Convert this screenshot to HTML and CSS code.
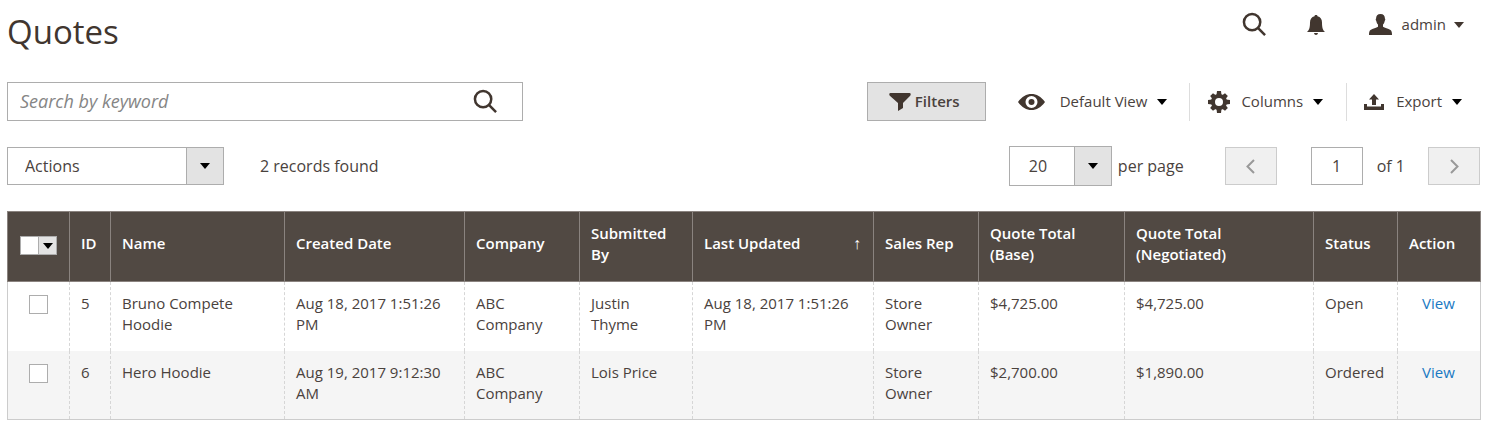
FILE: index.html
```html
<!DOCTYPE html>
<html lang="en">
<head>
    <meta charset="utf-8">
    <title>Quotes</title>
    <meta name="viewport" content="width=device-width, initial-scale=1">
    <link rel="stylesheet" href="styles.css">
</head>
<body>
    <!-- page header -->
    <header class="page-header">
        <h1>Quotes</h1>
        <div class="header-tools">
            <button type="button" class="plain" aria-label="Search">
                <svg class="icon-search" viewBox="0 0 26 26"><circle cx="10.5" cy="10.5" r="8.5"/><path d="M16.5 16.5L24 24"/></svg>
            </button>
            <button type="button" class="plain bell" aria-label="Notifications">
                <svg width="18" height="20" viewBox="0 0 18 20"><path d="M9 0c.9 0 1.5.5 1.5 1.3C13.5 2 15 4.3 15 7.5c0 5 .8 7.500 3 9.500H0c2.200-2 3-4.500 3-9.500 0-3.200 1.500-5.500 4.500-6.200C7.500.5 8.100 0 9 0zM7 18h4c-.2 1.300-1 2-2 2s-1.800-.7-2-2z"/></svg>
            </button>
            <button type="button" class="plain user">
                <svg width="23" height="21" viewBox="0 0 23 21"><path d="M11.500 0c3 0 4.500 1.700 4.400 4.600.6.4.5 1.800-.2 2.300-.3 1.700-.8 2.700-1.700 3.600v2.300c1.500 1.400 5.300 1.600 7.500 3.200 1.200.9 1.500 2.500 1.500 5H0c0-2.500.3-4.100 1.500-5 2.200-1.600 6-1.800 7.500-3.200v-2.300c-.9-.9-1.400-1.900-1.700-3.600-.7-.5-.8-1.900-.2-2.300C7 1.700 8.500 0 11.500 0z"/></svg>
                <span>admin</span>
                <span class="caret"></span>
            </button>
        </div>
    </header>

    <!-- search + grid controls -->
    <div class="toolbar">
        <div class="search">
            <input type="text" placeholder="Search by keyword" aria-label="Search by keyword">
            <button type="button" class="plain" aria-label="Search">
                <svg class="icon-search" viewBox="0 0 26 26"><circle cx="10.5" cy="10.5" r="8.5"/><path d="M16.5 16.5L24 24"/></svg>
            </button>
        </div>
        <div class="controls">
            <button type="button" class="filters">
                <svg width="22" height="18" viewBox="0 0 22 18"><path d="M1.500 0h19c1.500 0 1.500 2 .7 2.800L14 10v5l-5 3v-8L.8 2.800C0 2 0 0 1.500 0z"/></svg>
                <span>Filters</span>
            </button>
            <button type="button" class="plain control view">
                <svg width="27" height="16" viewBox="0 0 27 16"><path fill-rule="evenodd" d="M0 8C4 2.500 8.500 0 13.500 0S23 2.500 27 8c-4 5.500-8.500 8-13.500 8S4 13.500 0 8zm13.500-6a6 6 0 1 0 0 12 6 6 0 0 0 0-12z"/><circle cx="13.5" cy="8" r="3"/></svg>
                <span>Default View</span>
                <span class="caret"></span>
            </button>
            <button type="button" class="plain control columns">
                <svg width="22" height="22" viewBox="-11 -11 22 22"><circle class="ring" r="6"/><path d="M-2.500-7L-2-11h4L2.500-7zM-2.500 7L-2 11h4L2.500 7zM-7-2.500L-11-2v4L-7 2.500zM7-2.500L11-2v4L7 2.500z"/><path transform="rotate(45)" d="M-2.500-7L-2-10.500h4L2.500-7zM-2.500 7L-2 10.500h4L2.500 7zM-7-2.500L-10.500-2v4L-7 2.500zM7-2.500L10.500-2v4L7 2.500z"/></svg>
                <span>Columns</span>
                <span class="caret"></span>
            </button>
            <button type="button" class="plain control export">
                <svg width="20" height="16" viewBox="0 0 20 16"><path d="M10 0l5 5.500h-3V11H8V5.500H5zM0 10h3v2.500h14V10h3v6H0z"/></svg>
                <span>Export</span>
                <span class="caret"></span>
            </button>
        </div>
    </div>

    <!-- mass actions + paging -->
    <div class="toolbar paging">
        <div class="mass">
            <div class="select actions">
                <select aria-label="Actions"><option>Actions</option></select>
            </div>
            <span>2 records found</span>
        </div>
        <div class="pager">
            <div class="select size">
                <select id="per-page"><option>20</option></select>
            </div>
            <label for="per-page">per page</label>
            <button type="button" class="step prev" aria-label="Previous page" disabled>
                <svg width="9" height="15" viewBox="0 0 9 15"><path d="M8 1L1.500 7.500 8 14"/></svg>
            </button>
            <input type="text" id="page" value="1">
            <label for="page" class="total">of 1</label>
            <button type="button" class="step" aria-label="Next page" disabled>
                <svg width="9" height="15" viewBox="0 0 9 15"><path d="M1 1l6.500 6.500L1 14"/></svg>
            </button>
        </div>
    </div>

    <table class="grid">
        <colgroup>
            <col class="c-check"><col class="c-id"><col class="c-name"><col class="c-created">
            <col class="c-company"><col class="c-by"><col class="c-updated"><col class="c-rep">
            <col class="c-base"><col class="c-negotiated"><col class="c-status"><col class="c-action">
        </colgroup>
        <thead>
            <tr>
                <th class="check">
                    <div class="multicheck">
                        <input type="checkbox" aria-label="Select all">
                        <button type="button" aria-label="Selection options"><span class="caret"></span></button>
                    </div>
                </th>
                <th>ID</th>
                <th>Name</th>
                <th>Created Date</th>
                <th>Company</th>
                <th>Submitted By</th>
                <th><div class="sorted"><span>Last Updated</span><span class="arrow">↑</span></div></th>
                <th>Sales Rep</th>
                <th>Quote Total (Base)</th>
                <th>Quote Total<br>(Negotiated)</th>
                <th>Status</th>
                <th>Action</th>
            </tr>
        </thead>
        <tbody>
            <tr>
                <td class="check"><input type="checkbox" aria-label="Select quote 5"></td>
                <td>5</td>
                <td>Bruno Compete Hoodie</td>
                <td>Aug 18, 2017 1:51:26 PM</td>
                <td>ABC Company</td>
                <td>Justin Thyme</td>
                <td>Aug 18, 2017 1:51:26 PM</td>
                <td>Store Owner</td>
                <td>$4,725.00</td>
                <td>$4,725.00</td>
                <td>Open</td>
                <td class="action"><a href="#">View</a></td>
            </tr>
            <tr>
                <td class="check"><input type="checkbox" aria-label="Select quote 6"></td>
                <td>6</td>
                <td>Hero Hoodie</td>
                <td>Aug 19, 2017 9:12:30 AM</td>
                <td>ABC Company</td>
                <td>Lois Price</td>
                <td></td>
                <td>Store Owner</td>
                <td>$2,700.00</td>
                <td>$1,890.00</td>
                <td>Ordered</td>
                <td class="action"><a href="#">View</a></td>
            </tr>
        </tbody>
    </table>
</body>
</html>
```
FILE: styles.css
```css
* {box-sizing: border-box;}
body {margin: 0; padding: 6px 7px 8px; background: #fff; color: #4a423d; font: 15px/21px "Open Sans", "Noto Sans", sans-serif;}
button, input, select {font: inherit; color: inherit; border-radius: 0; margin: 0;}
button {display: flex; align-items: center; cursor: pointer;}
svg {display: block; fill: #41362f; flex: none;}
.plain {border: 0; background: none; padding: 0;}
.caret {border: 5px solid transparent; border-top: 6px solid #000; border-bottom: 0;}
.icon-search {width: 25px; height: 25px; fill: none; stroke: #41362f; stroke-width: 2.6;}

/* header */
.page-header {display: flex; justify-content: space-between; height: 76px;}
h1 {margin: 4px 0 0; font-size: 33px; line-height: 44px; font-weight: 400; color: #41362f;}
.header-tools {display: flex; align-items: center; height: 37px; padding-right: 16px;}
.bell {margin: 0 44px 0 40px;}
.user .caret {margin-left: 8px; border-top-color: #41362f;}
.user svg {margin-right: 10px;}

/* toolbars */
.toolbar {display: flex; justify-content: space-between; align-items: center;}
.search {display: flex; width: 35%; height: 39px; border: 1px solid #adadad; padding-right: 24px;}
.search input {flex: 1; min-width: 0; border: 0; padding: 0 12px; font-size: 18px;}
.search input::placeholder {color: #858585; font-style: italic; opacity: 1;}
.controls {display: flex; align-items: center;}
.filters {height: 39px; width: 119px; justify-content: center; gap: 4px; padding: 0 4px 0 0; border: 1px solid #adadad; background: #e3e3e3; font-weight: 600;}
.control {height: 38px;}
.control .caret {margin-left: 10px;}
.view {margin-left: 32px; padding-right: 22px;}
.view svg {margin-right: 15px;}
.columns {border-left: 1px solid #ddd; padding: 0 23px 0 18px;}
.columns svg {margin-right: 11px;}
.columns .ring {fill: none; stroke: #41362f; stroke-width: 4;}
.export {border-left: 1px solid #ddd; padding: 0 18px 0 17px;}
.export svg {margin-right: 12px;}

.paging {margin: 25px 0; font-size: 16px;}
.mass, .pager {display: flex; align-items: center;}
.mass {gap: 36px;}
.select {position: relative;}
.select select {width: 100%; height: 100%; appearance: none; border: 1px solid #adadad; padding: 0 54px 0 17px; background: linear-gradient(to left, #e3e3e3 36px, #adadad 36px, #adadad 37px, #fff 37px);}
.select::after {content: ""; position: absolute; right: 14px; top: 50%; margin-top: -3px; border: 5px solid transparent; border-top: 6px solid #000; border-bottom: 0; pointer-events: none;}
.actions {width: 217px; height: 38px;}
.size {width: 103px; height: 40px; margin-right: 6px;}
.size select {padding-left: 19px;}
.step {width: 52px; height: 38px; justify-content: center; padding: 0; border: 1px solid #ccc; background: #f0f0f0;}
.step svg {fill: none; stroke: #999; stroke-width: 2;}
.prev {margin: 0 34px 0 41px;}
#page {width: 52px; height: 38px; border: 1px solid #adadad; text-align: center; padding: 0;}
.total {margin: 0 23px 0 14px;}

/* grid */
.grid {width: 100%; table-layout: fixed; border-collapse: collapse; border: 1px solid #ccc;}
.c-check {width: 62px;}
.c-id {width: 41px;}
.c-name {width: 174px;}
.c-created {width: 180px;}
.c-company {width: 115px;}
.c-by {width: 113px;}
.c-updated {width: 181px;}
.c-rep {width: 105px;}
.c-base {width: 146px;}
.c-negotiated {width: 189px;}
.c-status {width: 84px;}
.c-action {width: 83px;}
.grid th, .grid td {padding: 0 12px 0 11px; text-align: left;}
.grid th {height: 70px; padding-bottom: 6px; background: #514943; color: #fff; font-weight: 600; border: 1px solid #8a837f; vertical-align: middle;}
.grid td {height: 69px; padding-top: 11px; vertical-align: top; border-left: 1px dashed #d6d6d6;}
.grid td:first-child {border-left: 1px solid #ccc;}
.grid tbody tr:nth-child(even) {background: #f5f5f5;}
.grid .check {padding-left: 0; padding-right: 0;}
.grid input {display: block; appearance: none; width: 19px; height: 19px; margin: 2px auto; border: 1px solid #adadad; background: #fff;}
.grid .multicheck {display: flex; justify-content: center; padding-top: 4px;}
.multicheck input {width: 18px; margin: 0; border-right: 0;}
.multicheck button {width: 19px; height: 19px; justify-content: center; padding: 0; border: 1px solid #adadad; background: #e3e3e3;}
.sorted {display: flex; justify-content: space-between;}
.arrow {font: 16px/21px "Liberation Sans", sans-serif;}
.grid .action {text-align: center;}
a {color: #1979c3; text-decoration: none;}
```
